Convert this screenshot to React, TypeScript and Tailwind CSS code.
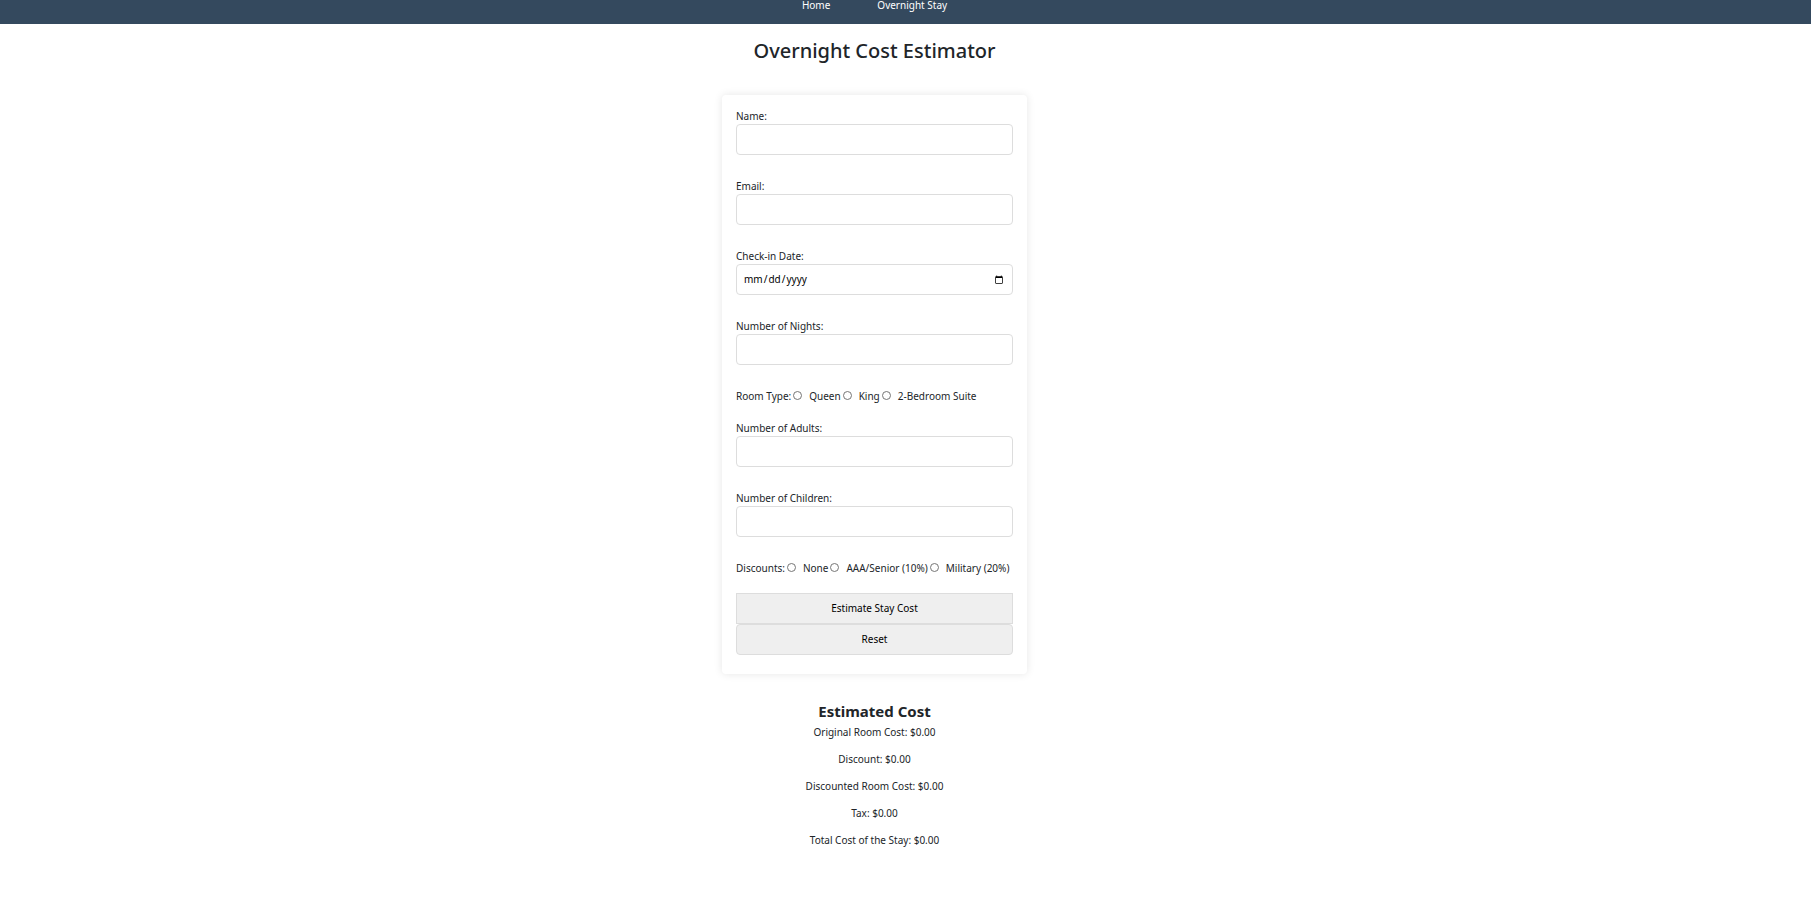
import type { InputHTMLAttributes } from "react";

const control =
  "block h-[31px] w-full border border-[#dddddd] px-[6px] text-[10px] leading-[15px] text-black";

interface FieldProps extends InputHTMLAttributes<HTMLInputElement> {
  id: string;
  label: string;
}

function Field({ id, label, ...rest }: FieldProps) {
  return (
    <div className="mb-6">
      <label htmlFor={id} className="block">
        {label}
      </label>
      <input id={id} name={id} className={`${control} rounded bg-white`} {...rest} />
    </div>
  );
}

interface RadioRowProps {
  legend: string;
  name: string;
  options: string[];
}

function RadioRow({ legend, name, options }: RadioRowProps) {
  return (
    <div
      role="radiogroup"
      aria-labelledby={`${name}-legend`}
      className="mb-[17px] flex items-center whitespace-nowrap"
    >
      <span id={`${name}-legend`}>{legend}</span>
      {options.map((option) => (
        <label key={option} className="flex items-center gap-[7px] pl-[2px]">
          <input
            type="radio"
            name={name}
            value={option}
            className="mb-[2px] size-[9px] appearance-none rounded-full border border-[#767676] bg-white checked:border-[3px] checked:border-[#0075ff]"
          />
          {option}
        </label>
      ))}
    </div>
  );
}

const costs = [
  "Original Room Cost: $0.00",
  "Discount: $0.00",
  "Discounted Room Cost: $0.00",
  "Tax: $0.00",
  "Total Cost of the Stay: $0.00",
];

export default function App() {
  return (
    <div className="bg-white font-['Noto_Sans',sans-serif] text-[10px] leading-[15px] text-[#212529]">
      <nav className="flex h-6 items-start justify-center gap-[47px] bg-[#34495e] pr-[62px] leading-[10px] text-white">
        <a href="#home">Home</a>
        <a href="#overnight-stay">Overnight Stay</a>
      </nav>

      <main className="flex flex-col items-center pr-[62px]">
        <h1 className="mt-[13px] mb-[31px] text-[20px] leading-[27px] font-medium">
          Overnight Cost Estimator
        </h1>

        <form className="w-[305px] rounded bg-white px-[14px] pt-[14px] pb-[19px] shadow-[0_0_9px_rgba(0,0,0,0.1)]">
          <Field id="name" label="Name:" type="text" />
          <Field id="email" label="Email:" type="email" />
          <Field id="checkin" label="Check-in Date:" type="date" />
          <Field id="nights" label="Number of Nights:" type="number" />
          <RadioRow
            legend="Room Type:"
            name="room"
            options={["Queen", "King", "2-Bedroom Suite"]}
          />
          <Field id="adults" label="Number of Adults:" type="number" />
          <Field id="children" label="Number of Children:" type="number" />
          <RadioRow
            legend="Discounts:"
            name="discount"
            options={["None", "AAA/Senior (10%)", "Military (20%)"]}
          />
          <button type="button" className={`${control} bg-[#efefef]`}>
            Estimate Stay Cost
          </button>
          <button type="reset" className={`${control} rounded bg-[#efefef]`}>
            Reset
          </button>
        </form>

        <section className="mt-7 text-center">
          <h2 className="text-[15px] leading-[18px] font-bold">Estimated Cost</h2>
          <div className="mt-[5px] flex flex-col gap-3">
            {costs.map((line) => (
              <p key={line}>{line}</p>
            ))}
          </div>
        </section>
      </main>
    </div>
  );
}
